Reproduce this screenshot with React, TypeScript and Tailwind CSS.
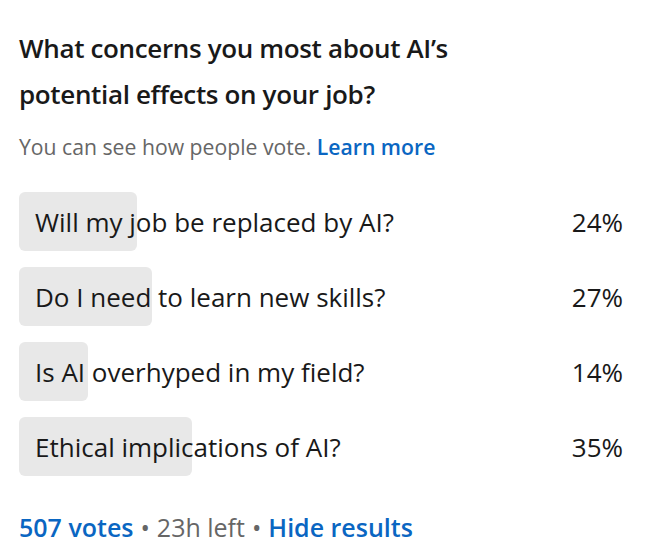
type PollOption = {
  label: string;
  pct: number;
};

const options: PollOption[] = [
  { label: "Will my job be replaced by AI?", pct: 24 },
  { label: "Do I need to learn new skills?", pct: 27 },
  { label: "Is AI overhyped in my field?", pct: 14 },
  { label: "Ethical implications of AI?", pct: 35 },
];

// width of the option track the fill bar is measured against
const TRACK = 493;

function OptionRow({ label, pct }: PollOption) {
  return (
    <div className="flex h-[59px] items-center">
      <div className="relative flex h-full w-[493px] items-center">
        <div
          className="absolute inset-y-0 left-0 rounded-[6px] bg-[#e8e8e8]"
          style={{ width: Math.round((TRACK * pct) / 100) }}
        />
        <span className="relative pl-[16px] text-[26px] leading-[32px] text-[#191919] whitespace-nowrap">
          {label}
        </span>
      </div>
      <span className="ml-auto text-[26px] leading-[32px] text-[#191919]">{pct}%</span>
    </div>
  );
}

export default function App() {
  return (
    <div
      className="h-[559px] w-[652px] bg-white pl-[19px] pr-[29px] pt-[25px]"
      style={{ fontFamily: '"Open Sans", "Noto Sans", sans-serif' }}
    >
      <h2 className="text-[26px] font-semibold leading-[46px] tracking-[-0.35px] text-[#191919]">
        What concerns you most about AI’s
        <br />
        potential effects on your job?
      </h2>
      <p className="mt-[16px] text-[21.2px] leading-[28px] text-[#666666]">
        You can see how people vote.{" "}
        <a className="font-semibold text-[#0a66c2]">Learn more</a>
      </p>

      <div className="mt-[31px] flex flex-col gap-[16px]">
        {options.map((o) => (
          <OptionRow key={o.label} {...o} />
        ))}
      </div>

      <p className="mt-[36px] text-[25px] leading-[30px] text-[#666666]">
        <span className="font-semibold text-[#0a66c2]">507 votes</span>
        <span className="mx-[7px]">•</span>
        23h left
        <span className="mx-[7px]">•</span>
        <span className="font-semibold text-[#0a66c2]">Hide results</span>
      </p>
    </div>
  );
}
